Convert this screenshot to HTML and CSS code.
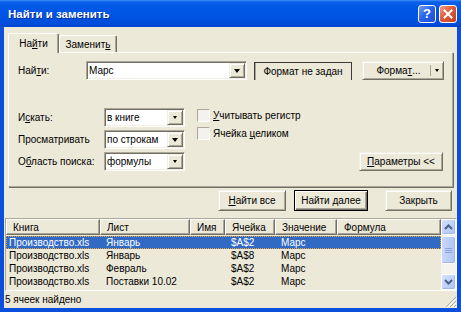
FILE: index.html
```html
<!DOCTYPE html>
<html lang="ru">
<head>
<meta charset="utf-8">
<title>Найти и заменить</title>
<link rel="stylesheet" href="styles.css">
</head>
<body>
<div class="window">
  <div class="titlebar">
    <span class="title">Найти и заменить</span>
    <div class="tb-buttons">
      <span class="tb-btn help">?</span>
      <span class="tb-btn close"><svg width="10" height="10" viewBox="0 0 10 10"><path d="M1.5 1.5L8.5 8.5M8.5 1.5L1.5 8.5" stroke="#fff" stroke-width="2" stroke-linecap="square"/></svg></span>
    </div>
  </div>
  <div class="frame">
    <div class="tabs">
      <div class="tab tab-find active">На<u>й</u>ти</div>
      <div class="tab tab-replace">Заменит<u>ь</u></div>
    </div>
    <div class="panel">
      <div class="row1">
        <span class="lbl-find">Най<u>т</u>и:</span>
        <div class="combo combo-find"><span class="combo-text">Марс</span><span class="drop"><i class="arrow"></i></span></div>
        <div class="fmt-preview">Формат не задан</div>
        <div class="split-btn"><span class="split-main">Форма<u>т</u>...</span><span class="split-arrow"><i class="arrow arrow-sm"></i></span></div>
      </div>
      <div class="lower">
        <div class="fields">
          <div class="field"><span class="field-lbl">И<u>с</u>кать:</span><div class="combo combo-sm"><span class="combo-text">в книге</span><span class="drop"><i class="arrow arrow-sm"></i></span></div></div>
          <div class="field"><span class="field-lbl">Просматривать</span><div class="combo combo-sm"><span class="combo-text">по строкам</span><span class="drop"><i class="arrow"></i></span></div></div>
          <div class="field"><span class="field-lbl">О<u>б</u>ласть поиска:</span><div class="combo combo-sm"><span class="combo-text">формулы</span><span class="drop"><i class="arrow arrow-sm"></i></span></div></div>
        </div>
        <div class="checks">
          <div class="check"><span class="box"></span><span><u>У</u>читывать регистр</span></div>
          <div class="check"><span class="box"></span><span>Ячейка <u>ц</u>еликом</span></div>
        </div>
        <div class="btn btn-params"><span><u>П</u>араметры &lt;&lt;</span></div>
      </div>
    </div>
    <div class="actions">
      <div class="btn btn-findall"><span><u>Н</u>айти все</span></div>
      <div class="btn btn-default btn-next"><span>Найти далее</span></div>
      <div class="btn btn-close"><span>Закрыть</span></div>
    </div>
    <div class="list">
      <div class="list-main">
        <div class="hdr">
          <div class="hcell c1">Книга</div>
          <div class="hcell c2">Лист</div>
          <div class="hcell c3">Имя</div>
          <div class="hcell c4">Ячейка</div>
          <div class="hcell c5">Значение</div>
          <div class="hcell c6">Формула</div>
        </div>
        <div class="rows">
          <div class="row selected"><span class="cell c1">Производство.xls</span><span class="cell c2">Январь</span><span class="cell c3"></span><span class="cell c4">$A$2</span><span class="cell c5">Марс</span><span class="cell c6"></span></div>
          <div class="row"><span class="cell c1">Производство.xls</span><span class="cell c2">Январь</span><span class="cell c3"></span><span class="cell c4">$A$8</span><span class="cell c5">Марс</span><span class="cell c6"></span></div>
          <div class="row"><span class="cell c1">Производство.xls</span><span class="cell c2">Февраль</span><span class="cell c3"></span><span class="cell c4">$A$2</span><span class="cell c5">Марс</span><span class="cell c6"></span></div>
          <div class="row"><span class="cell c1">Производство.xls</span><span class="cell c2">Поставки 10.02</span><span class="cell c3"></span><span class="cell c4">$A$2</span><span class="cell c5">Марс</span><span class="cell c6"></span></div>
        </div>
      </div>
      <div class="scrollbar">
        <div class="sb-btn"><svg width="9" height="6" viewBox="0 0 9 6"><path d="M1 5L4.5 1.5L8 5" fill="none" stroke="#4D6185" stroke-width="2"/></svg></div>
        <div class="sb-track">
          <div class="sb-thumb"><svg width="7" height="7" viewBox="0 0 7 7"><path d="M0 1.5H7M0 3.5H7M0 5.5H7" stroke="#8CA4E0" stroke-width="1"/></svg></div>
        </div>
        <div class="sb-btn"><svg width="9" height="6" viewBox="0 0 9 6"><path d="M1 1L4.5 4.5L8 1" fill="none" stroke="#4D6185" stroke-width="2"/></svg></div>
      </div>
    </div>
    <div class="status">
      <span class="status-text">5 ячеек найдено</span>
      <svg class="grip" width="12" height="12" viewBox="0 0 12 12"><path d="M11 1L1 11M11 5L5 11M11 9L9 11" stroke="#ACA899" stroke-width="1"/><path d="M12 2L2 12M12 6L6 12M12 10L10 12" stroke="#fff" stroke-width="1"/></svg>
    </div>
  </div>
</div>
</body>
</html>
```
FILE: styles.css
```css
* { box-sizing: border-box; }
html, body { margin: 0; padding: 0; }
body {
  width: 461px;
  height: 312px;
  overflow: hidden;
  background: #0054E3;
  font: 10px "Liberation Sans", Tahoma, Arial, sans-serif;
  color: #000;
}
u { text-decoration: underline; text-underline-offset: 1px; }

.window { width: 461px; height: 312px; display: flex; flex-direction: column; }

.titlebar {
  height: 27px;
  flex: none;
  display: flex;
  align-items: center;
  padding: 0 4px 0 8px;
  background: linear-gradient(#3D8DF5 0, #0B5FEA 2px, #0058E6 8px, #0054E2 60%, #004CD9 90%, #0040C8 100%);
}
.title {
  flex: 1;
  color: #fff;
  font-weight: bold;
  font-size: 11.5px;
  text-shadow: 1px 1px #0A2A9C;
}
.tb-buttons { display: flex; gap: 3px; }
.tb-btn {
  width: 18px;
  height: 18px;
  border: 1px solid #fff;
  border-radius: 3px;
  display: flex;
  align-items: center;
  justify-content: center;
}
.help {
  background: linear-gradient(135deg, #6FA0F7, #2A64E8 45%, #1B4FD6);
  color: #fff;
  font-weight: bold;
  font-size: 13px;
  line-height: 1;
}
.close { background: linear-gradient(135deg, #F3A283, #E05A3A 45%, #C63F1C); }

.frame {
  flex: 1;
  min-height: 0;
  display: flex;
  flex-direction: column;
  background: #ECE9D8;
  border-style: solid;
  border-color: #0B4FDD;
  border-width: 0 4px 4px 4px;
}

/* tabs */
.tabs {
  display: flex;
  align-items: flex-end;
  height: 19px;
  margin: 6px 0 0 4px;
  position: relative;
  z-index: 1;
}
.tab {
  height: 17px;
  display: flex;
  align-items: center;
  justify-content: center;
  border-top: 1px solid #fff;
  border-left: 1px solid #fff;
  border-right: 1px solid #716F64;
  box-shadow: inset -1px 0 #ACA899;
  border-radius: 2px 2px 0 0;
  background: #ECE9D8;
}
.tab-find { width: 51px; }
.tab-replace { width: 58px; }
.tab.active { height: 20px; margin-bottom: -1px; }

/* panel */
.panel {
  margin-left: 4px;
  width: 445px;
  height: 135px;
  flex: none;
  border: 1px solid;
  border-color: #fff #ACA899 #ACA899 #fff;
  box-shadow: 1px 1px #716F64;
  padding: 8px 0 0 9px;
}
.row1 { display: flex; align-items: center; height: 19px; }
.lbl-find { width: 68px; }

.combo {
  display: flex;
  height: 19px;
  background: #fff;
  border: 1px solid;
  border-color: #ACA899 #fff #fff #ACA899;
  box-shadow: inset 1px 1px #716F64, inset -1px -1px #F1EFE2;
  padding: 1px;
}
.combo-find { width: 161px; }
.combo-sm { width: 81px; }
.combo-text {
  flex: 1;
  display: flex;
  align-items: center;
  padding-left: 1px;
  white-space: nowrap;
  overflow: hidden;
}
.drop {
  width: 16px;
  flex: none;
  background: #ECE9D8;
  border: 1px solid;
  border-color: #F1EFE2 #716F64 #716F64 #F1EFE2;
  box-shadow: inset 1px 1px #fff, inset -1px -1px #ACA899;
  display: flex;
  align-items: center;
  justify-content: center;
}
.arrow {
  display: block;
  width: 0;
  height: 0;
  border-left: 3.5px solid transparent;
  border-right: 3.5px solid transparent;
  border-top: 4px solid #000;
}
.arrow-sm {
  border-left-width: 2.5px;
  border-right-width: 2.5px;
  border-top-width: 3px;
}

.fmt-preview {
  width: 98px;
  height: 18px;
  margin-left: 7px;
  align-self: flex-end;
  border: 1px solid #3A3A3A;
  border-bottom: 0;
  box-shadow: inset 1px 0 #ACA899;
  display: flex;
  align-items: center;
  justify-content: center;
  white-space: nowrap;
}
.split-btn {
  width: 82px;
  height: 19px;
  margin-left: 10px;
  display: flex;
  border: 1px solid;
  border-color: #F1EFE2 #716F64 #716F64 #F1EFE2;
  box-shadow: inset 1px 1px #fff, inset -1px -1px #ACA899;
}
.split-main {
  flex: 1;
  display: flex;
  align-items: center;
  justify-content: center;
  padding-left: 4px;
}
.split-arrow {
  width: 12px;
  margin: 3px 1px 3px 0;
  border-left: 1px solid #ACA899;
  display: flex;
  align-items: center;
  justify-content: center;
}

.lower { display: flex; align-items: flex-start; margin-top: 28px; }
.fields { display: flex; flex-direction: column; gap: 3px; }
.field { display: flex; align-items: center; height: 19px; }
.field-lbl { width: 86px; white-space: nowrap; }
.checks {
  display: flex;
  flex-direction: column;
  gap: 5px;
  margin: 1px 0 0 12px;
}
.check { display: flex; align-items: center; gap: 3px; height: 13px; white-space: nowrap; }
.box {
  width: 13px;
  height: 13px;
  flex: none;
  background: #F3F2EC;
  border: 1px solid;
  border-color: #ACA899 #fff #fff #ACA899;
}

.btn {
  display: flex;
  align-items: center;
  justify-content: center;
  background: #ECE9D8;
  border: 1px solid;
  border-color: #F1EFE2 #716F64 #716F64 #F1EFE2;
  box-shadow: inset 1px 1px #fff, inset -1px -1px #ACA899;
  white-space: nowrap;
}
.btn-default {
  border-color: #000;
  box-shadow: inset 1px 1px #fff, inset -1px -1px #716F64, inset -2px -2px #ACA899;
}
.btn-params {
  width: 84px;
  height: 19px;
  margin-left: auto;
  margin-right: 9px;
  align-self: flex-end;
}

/* action buttons */
.actions {
  display: flex;
  justify-content: flex-end;
  height: 21px;
  margin: 3px 5px 0 0;
  flex: none;
}
.btn-findall { width: 68px; }
.btn-next { width: 74px; margin-left: 8px; }
.btn-close { width: 67px; margin-left: 17px; }

/* results list */
.list {
  display: flex;
  height: 73px;
  flex: none;
  margin: 7px 0 0 1px;
  border: 1px solid;
  border-color: #ACA899 #fff #fff #ACA899;
  background: #ECE9D8;
}
.list-main { flex: 1; min-width: 0; }
.hdr { display: flex; height: 16px; }
.hcell {
  height: 16px;
  padding-left: 6px;
  display: flex;
  align-items: center;
  border: 1px solid;
  border-color: #fff #716F64 #716F64 #fff;
  box-shadow: inset -1px -1px #ACA899;
  white-space: nowrap;
}
.c1 { width: 94px; }
.c2 { width: 90px; }
.c3 { width: 35px; }
.c4 { width: 50px; }
.c5 { width: 62px; }
.c6 { width: 104px; }
.rows { padding-top: 1px; }
.row { display: flex; height: 13px; align-items: center; }
.cell { padding-left: 6px; white-space: nowrap; overflow: hidden; }
.row .c1 { padding-left: 3px; }
.row.selected {
  background: #316AC5;
  color: #fff;
  outline: 1px dotted #E9A33B;
  outline-offset: -1px;
}

.scrollbar {
  width: 15px;
  flex: none;
  display: flex;
  flex-direction: column;
  background: #F4F3EE;
}
.sb-btn {
  height: 16px;
  flex: none;
  border: 1px solid #fff;
  border-radius: 2px;
  background: linear-gradient(135deg, #D6E2FC, #BCCFF9 60%, #ADC3F4);
  box-shadow: inset -1px -1px #A4B8E8;
  display: flex;
  align-items: center;
  justify-content: center;
}
.sb-track { flex: 1; padding-top: 1px; }
.sb-thumb {
  height: 28px;
  border: 1px solid #fff;
  border-radius: 2px;
  background: linear-gradient(90deg, #C9D8FB, #BACDF8 60%, #B0C5F5);
  box-shadow: inset -1px -1px #A4B8E8;
  display: flex;
  align-items: center;
  justify-content: center;
}

.status {
  flex: 1;
  display: flex;
  align-items: center;
  padding-left: 1px;
}
.status-text { flex: 1; }
.grip { align-self: flex-end; margin: 0 0 0 auto; }
```
